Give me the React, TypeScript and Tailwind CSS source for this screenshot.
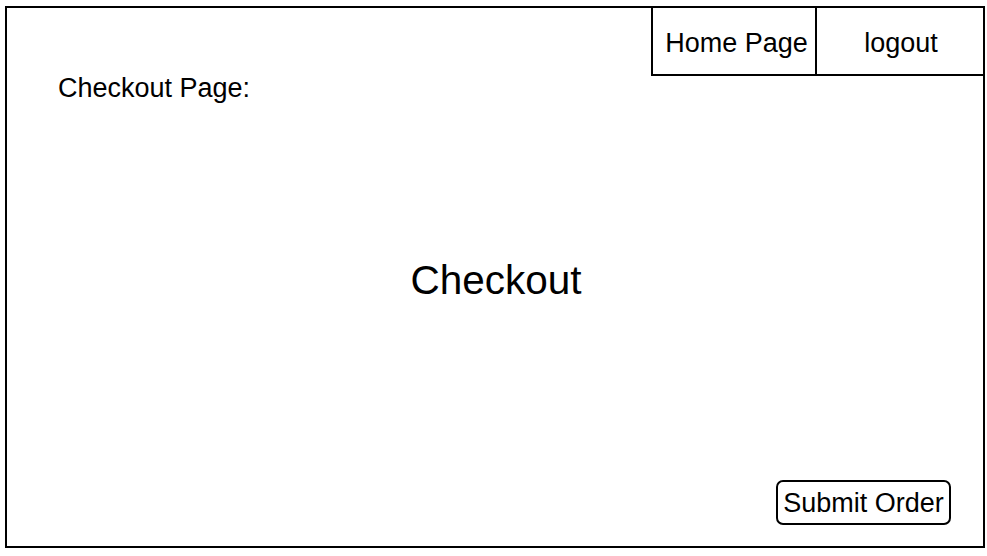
const font = { fontFamily: '"Liberation Sans", Arial, Helvetica, sans-serif' };

const navItems = [
  { label: "Home Page", width: "w-[166px] pl-[5px]" },
  { label: "logout", width: "w-[170px] pl-[2px]" },
];

export default function App() {
  return (
    <div className="h-[556px] w-[987px] bg-white text-black" style={font}>
      <div className="ml-[5px] pt-[6px]">
        <div className="flex h-[542px] w-[980px] flex-col border-2 border-black">
          <div className="flex h-[67px] items-start justify-between">
            <p className="mt-[65px] pl-[51px] text-[27px] leading-[31px]">
              Checkout Page:
            </p>
            <nav className="-mr-[2px] -mt-[2px] flex">
              {navItems.map((item, i) => (
                <a
                  key={item.label}
                  className={`flex h-[70px] items-center justify-center border-2 border-black pt-[4px] text-[27px] leading-[31px] ${item.width} ${i > 0 ? "-ml-[2px]" : ""}`}
                >
                  {item.label}
                </a>
              ))}
            </nav>
          </div>

          <div className="flex flex-1 items-center justify-center pt-[5px]">
            <h1 className="pl-[2px] text-[40.5px] leading-[47px]">Checkout</h1>
          </div>

          <div className="flex justify-end pb-[21px] pr-[32px]">
            <button className="flex h-[45px] w-[175px] items-center justify-center rounded-[7px] border-2 border-black pt-[2px] text-[27px] leading-[31px]">
              Submit Order
            </button>
          </div>
        </div>
      </div>
    </div>
  );
}
